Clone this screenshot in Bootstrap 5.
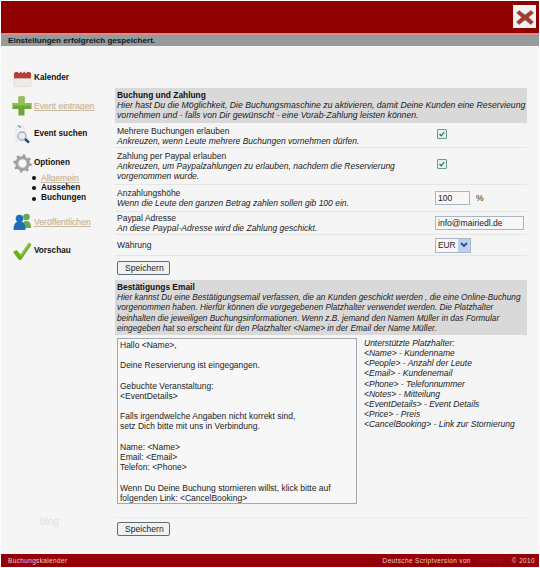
<!DOCTYPE html>
<html lang="de">
<head>
<meta charset="utf-8">
<title>Buchungskalender</title>
<link href="https://cdn.jsdelivr.net/npm/bootstrap@5.3.0/dist/css/bootstrap.min.css" rel="stylesheet">
<style>
html,body{margin:0;height:568px;overflow:hidden;background:#fff}
body{font-family:"Liberation Sans",Arial,sans-serif;font-size:8.5px;line-height:10.1px;color:#222}
.shell{width:538px;height:566px;margin:1px 0 0 1px;display:flex;flex-direction:column;background:#f5f5f5}
.topbar{height:32px;background:#8f0000;flex:none;display:flex;justify-content:flex-end;align-items:flex-start;padding:4px 3px 0 0}
.closer{width:23px;height:23px;background:#f4f1ef;display:flex;align-items:center;justify-content:center}
.pinkline{height:2px;background:#cf8f8f;flex:none}
.msgbar{height:11px;background:#959a9b;flex:none;font-weight:700;color:#10181c;padding-left:7px;line-height:11px;font-size:8.1px}
.bodywrap{flex:1;display:flex;min-height:0;margin-right:1px}
.sidebar{width:114px;flex:none;padding-top:20px;font-weight:700;font-size:8.2px;color:#111;position:relative}
.navitem{display:flex;align-items:center;height:24px;padding-left:11px;gap:2px}
.navitem svg{flex:none}
.fade-link{color:#c9b79b;font-weight:400;font-size:8.6px;text-decoration:underline;-webkit-text-stroke:.2px #c9b79b}
.submenu{list-style:none;margin:-2px 0 0;padding:0 0 0 31px;line-height:10.2px}
.submenu li{display:flex;align-items:center;gap:5px}
.submenu li::before{content:"";width:4px;height:4px;border-radius:50%;background:#111;flex:none}
.bloglabel{position:absolute;left:39px;top:471px;color:#dedede;font-weight:400;font-size:10px}
.nav-gap-a{margin-top:4px}
.nav-gap-b{margin-top:5px}
.nav-gap-c{margin-top:6px}
.mainpane{width:412px;flex:none;padding-top:42px;display:flex;flex-direction:column}
.sechead{background:#d9d9d9;padding:2px 2px 3px 2px;color:#222;font-style:italic;white-space:nowrap}
.sechead b{display:block;font-style:normal;color:#111;font-size:8.4px}
.head-first{font-size:8.68px}
.head-second{font-size:8.3px;padding-bottom:2px}
.optrow{display:flex;align-items:center;border-bottom:1px solid #e6e6e6;padding:0 2px}
.optlabel{width:318px;flex:none}
.optlabel em{display:block;color:#222}
.rowa{height:25px;padding-top:2px}
.rowb{height:37px}
.rowc{height:27px}
.rowd{height:23px}
.rowe{height:21px}
.form-check-input.tick{width:10px;height:10px;margin:-4px 0 0 2px;border-radius:1px;background-color:#e4f1e8;border:1px solid #6d9a8c;background-size:10px;float:none;--bs-form-check-bg-image:none;background-image:url("data:image/svg+xml,%3csvg xmlns='http://www.w3.org/2000/svg' viewBox='0 0 10 10'%3e%3cpath fill='none' stroke='%232c6b46' stroke-width='1.2' d='M2.6 5l1.6 1.800 3-3.800'/%3e%3c/svg%3e")}
.form-control.fieldbox,.form-select.pickbox{font-size:8.6px;line-height:11px;padding:1px 2px;border-radius:0;border:1px solid #a9b6c4;background-color:#f7f7f7;color:#222;min-height:0;height:14px;box-shadow:none}
.narrowbox{width:35px}
.widebox{width:89px}
.pickbox.form-select{width:36px;height:15px;padding:0 0 0 2px;background-image:none;font-size:8.3px}
.selwrap{position:relative;display:inline-block;width:36px;height:15px}
.selarrow{position:absolute;right:1px;top:1px;width:12px;height:13px;background:#bcd0ef;display:flex;align-items:center;justify-content:center;pointer-events:none}
.unit{margin-left:6px}
.savebtn.btn{font-size:8.6px;line-height:12px;padding:0 7px;height:14px;background:#f1f1f1;border:1px solid #5e6c78;border-radius:2px;color:#222;width:53px;white-space:nowrap}
.savearea{padding:5px 0 0 2px;height:24px}
.mailrow{display:flex;padding:3px 0 0 2px;gap:7px}
.mailbox{width:240px;height:166px;border:1px solid #a5a8ad;background:#f7f7f7;padding:1px 2px;color:#222;font-size:8.5px;line-height:10.2px;resize:none;border-radius:0;overflow:hidden;font-family:inherit;flex:none}
.hints{font-style:italic;line-height:10.2px;color:#222}
.hints span{display:block;white-space:nowrap}
.bottomsave{border-top:1px solid #ebebeb;margin-top:13px;padding:4px 0 0 2px}
.footerbar{height:13px;background:#950008;flex:none;color:#eccfcf;font-size:6.5px;line-height:13px;letter-spacing:.35px;display:flex;justify-content:space-between;padding:0 4px 0 7px}
.footerright{display:flex;gap:7px}
.footlink{color:#a5123a;text-decoration:none;width:27px;overflow:hidden;white-space:nowrap}
</style>
</head>
<body>
<div class="shell">
  <div class="topbar">
    <div class="closer">
      <svg width="20" height="20" viewBox="0 0 20 20"><path d="M4 3.500l6 4.500 6-4.500 2.500 2.500-5 4.300 5 4.700-2.700 2.500-5.800-4.700-5.900 4.700-2.600-2.500 5.200-4.700-5-4.300z" fill="#a8382f" stroke="#7c7370" stroke-width=".8"/></svg>
    </div>
  </div>
  <div class="pinkline"></div>
  <div class="msgbar">Einstellungen erfolgreich gespeichert.</div>
  <div class="bodywrap">
    <div class="sidebar">
      <div class="navitem">
        <svg width="20" height="17" viewBox="0 0 20 17"><rect x="2" y="3" width="17" height="13.500" rx="1" fill="#efebe8" stroke="#d8d2cd" stroke-width=".6"/><path d="M2 8V4a2 2 0 0 1 2-2h13a2 2 0 0 1 2 2v4z" fill="#b5403a"/><path d="M2 8h17v1H2z" fill="#d9a9a4"/><path d="M6 1h2v2H6zM13 1h2v2h-2zM9.500 1h2v2h-2z" fill="#e9dcd8"/></svg>
        <span>Kalender</span>
      </div>
      <div class="navitem nav-gap-a">
        <svg width="20" height="20" viewBox="0 0 20 20"><path d="M6.500 0.500h6v6.500h7v6h-7v6.500h-6v-6.500h-6v-6h6z" fill="#6fa63a"/><path d="M6.500 0.500h6v6.500h7v2.500H0.500v-2.500h6z" fill="#90bf58"/></svg>
        <span class="fade-link">Event eintragen</span>
      </div>
      <div class="navitem nav-gap-a">
        <svg width="20" height="20" viewBox="0 0 20 20"><path d="M4 3l7-2 5 16H4z" fill="#f1f1f3" stroke="#d5d8dd" stroke-width=".6"/><circle cx="10" cy="12" r="4" fill="#e9eef2" stroke="#a2abb5" stroke-width="1.300"/><path d="M13 15l4 3.500" stroke="#1f4f84" stroke-width="2.400"/><path d="M6 1.500l3 2" stroke="#6d8299" stroke-width="1.200"/></svg>
        <span>Event suchen</span>
      </div>
      <div class="navitem nav-gap-b">
        <svg width="20" height="19" viewBox="0 0 20 19"><circle cx="10.500" cy="9.500" r="5.800" fill="none" stroke="#a3a3a3" stroke-width="3.200"/><circle cx="10.500" cy="9.500" r="8" fill="none" stroke="#999" stroke-width="2.400" stroke-dasharray="2.400 3.900"/><circle cx="10.500" cy="9.500" r="3.400" fill="#f8f8f8"/></svg>
        <span>Optionen</span>
      </div>
      <ul class="submenu">
        <li><span class="fade-link">Allgemein</span></li>
        <li>Aussehen</li>
        <li>Buchungen</li>
      </ul>
      <div class="navitem nav-gap-c">
        <svg width="20" height="19" viewBox="0 0 20 19"><circle cx="14.500" cy="5" r="3.300" fill="#6aa84a"/><path d="M10 16c0-5 1.500-7 4.500-7s4.500 2 4.500 7z" fill="#6aa84a"/><circle cx="7.500" cy="6.500" r="3.800" fill="#1f6fb8"/><path d="M1.500 18c0-6 2-8.500 6-8.500s6 2.500 6 8.500z" fill="#1f6fb8"/></svg>
        <span class="fade-link">Veröffentlichen</span>
      </div>
      <div class="navitem nav-gap-b">
        <svg width="20" height="20" viewBox="0 0 20 20"><path d="M1 11l3.500-2 4 4.500L17 1.500l2.500 2L9 19H7z" fill="#6cab22"/><path d="M8.500 13.500L17 1.500l1.200.9L9 16z" fill="#93ca4c"/></svg>
        <span>Vorschau</span>
      </div>
      <div class="bloglabel">blog</div>
    </div>
    <div class="mainpane">
      <div class="sechead head-first">
        <b>Buchung und Zahlung</b>
        Hier hast Du die Möglichkeit, Die Buchungsmaschine zu aktivieren, damit Deine Kunden eine Reservieung<br>vornehmen und - falls von Dir gewünscht - eine Vorab-Zahlung leisten können.
      </div>
      <div class="optrow rowa">
        <div class="optlabel">Mehrere Buchungen erlauben<em>Ankreuzen, wenn Leute mehrere Buchungen vornehmen dürfen.</em></div>
        <input class="form-check-input tick" type="checkbox" checked aria-label="Mehrere Buchungen erlauben">
      </div>
      <div class="optrow rowb">
        <div class="optlabel">Zahlung per Paypal erlauben<em>Ankreuzen, um Paypalzahlungen zu erlauben, nachdem die Reservierung<br>vorgenommen wurde.</em></div>
        <input class="form-check-input tick" type="checkbox" checked aria-label="Zahlung per Paypal erlauben">
      </div>
      <div class="optrow rowc">
        <div class="optlabel">Anzahlungshöhe<em>Wenn die Leute den ganzen Betrag zahlen sollen gib 100 ein.</em></div>
        <input class="form-control fieldbox narrowbox" type="text" value="100" aria-label="Anzahlungshöhe"><span class="unit">%</span>
      </div>
      <div class="optrow rowd">
        <div class="optlabel">Paypal Adresse<em>An diese Paypal-Adresse wird die Zahlung geschickt.</em></div>
        <input class="form-control fieldbox widebox" type="text" value="info@mairiedl.de" aria-label="Paypal Adresse">
      </div>
      <div class="optrow rowe">
        <div class="optlabel">Währung</div>
        <div class="selwrap">
          <select class="form-select pickbox" aria-label="Währung"><option>EUR</option></select>
          <span class="selarrow"><svg width="8" height="6" viewBox="0 0 8 6"><path d="M1 1l3 3 3-3" fill="none" stroke="#2f4f9a" stroke-width="1.800"/></svg></span>
        </div>
      </div>
      <div class="savearea"><button class="btn savebtn" type="button">Speichern</button></div>
      <div class="sechead head-second">
        <b>Bestätigungs Email</b>
        Hier kannst Du eine Bestätigungsemail verfassen, die an Kunden geschickt werden , die eine Online-Buchung<br>vorgenommen haben. Hierfür können die vorgegebenen Platzhalter verwendet werden. Die Platzhalter<br>beinhalten die jeweiligen Buchungsinformationen. Wenn z.B. jemand den Namen Müller in das Formular<br>eingegeben hat so erscheint für den Platzhalter &lt;Name&gt; in der Email der Name Müller.
      </div>
      <div class="mailrow">
        <textarea class="mailbox" aria-label="Bestätigungs Email">Hallo &lt;Name&gt;,

Deine Reservierung ist eingegangen.

Gebuchte Veranstaltung:
&lt;EventDetails&gt;

Falls irgendwelche Angaben nicht korrekt sind,
setz Dich bitte mit uns in Verbindung.

Name: &lt;Name&gt;
Email: &lt;Email&gt;
Telefon: &lt;Phone&gt;

Wenn Du Deine Buchung stornieren willst, klick bitte auf folgenden Link: &lt;CancelBooking&gt;</textarea>
        <div class="hints">
          <span>Unterstützte Platzhalter:</span>
          <span>&lt;Name&gt; - Kundenname</span>
          <span>&lt;People&gt; - Anzahl der Leute</span>
          <span>&lt;Email&gt; - Kundenemail</span>
          <span>&lt;Phone&gt; - Telefonnummer</span>
          <span>&lt;Notes&gt; - Mitteilung</span>
          <span>&lt;EventDetails&gt; - Event Details</span>
          <span>&lt;Price&gt; - Preis</span>
          <span>&lt;CancelBooking&gt; - Link zur Stornierung</span>
        </div>
      </div>
      <div class="bottomsave"><button class="btn savebtn" type="button">Speichern</button></div>
    </div>
  </div>
  <div class="footerbar">
    <span>Buchungskalender</span>
    <span class="footerright"><span>Deutsche Scriptversion von</span><a class="footlink" href="#">mairiedl</a><span>© 2010</span></span>
  </div>
</div>
</body>
</html>
